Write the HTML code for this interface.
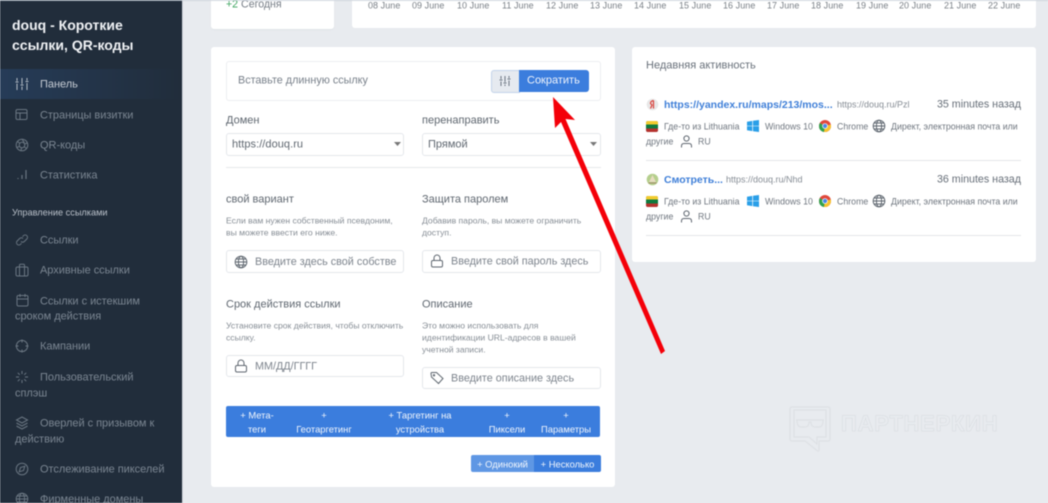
<!DOCTYPE html>
<html><head><meta charset="utf-8"><style>
html,body{margin:0;padding:0}
body{width:1048px;height:503px;overflow:hidden;position:relative;background:#e8ebef;font-family:"Liberation Sans","Noto Sans CJK SC",sans-serif}
#w{position:absolute;left:0;top:0;width:1048px;height:503px;overflow:hidden;filter:blur(.45px)}
#w div,#w svg{position:absolute}
.t{white-space:nowrap;transform:translateY(calc(-50% + 1px));line-height:1}
.n{font-size:11px;color:#7b8692;letter-spacing:-.03px;transform:translateY(calc(-50% + 2px))}
.l{font-size:11px;color:#5f6770;transform:translateY(calc(-50% + 2px))}
.s{font-size:8.6px;color:#868d95;transform:translateY(-50%)}
.p{font-size:10.8px;color:#7d848d}
.m{font-size:8.8px;color:#6f767f;transform:translateY(-50%)}
.d{font-size:9px;color:#7a8087;letter-spacing:.05px;transform:translateY(-50%)}
.card{background:#fff;border-radius:3px}
.i{background:#fff;border:1px solid #e4e7eb;border-radius:3px;box-sizing:border-box}
.b{font-size:9.4px;color:#f0f5fc;text-align:center}
svg.ic{fill:none;stroke:#6a7682;stroke-width:1}
svg.g{fill:none;stroke:#5f6770;stroke-width:1}
</style></head><body><div id="w">

<div style="left:0;top:0;width:182px;height:503px;background:#212d3b"></div>
<div style="left:182px;top:0;width:1px;height:503px;background:#d4d8dd"></div>
<div style="left:0;top:69px;width:182px;height:30px;background:linear-gradient(90deg,#263c58,#212d3b)"></div>

<div class="t" style="left:12px;top:23.500px;font-size:14px;font-weight:bold;color:#f0f2f5">douq - Короткие</div>
<div class="t" style="left:12px;top:43.500px;font-size:14px;font-weight:bold;color:#f0f2f5">ссылки, QR-коды</div>

<div class="t n" style="left:40px;top:83px;color:#c6ccd4">Панель</div>
<div class="t n" style="left:40px;top:113.500px">Страницы визитки</div>
<div class="t n" style="left:40px;top:144px">QR-коды</div>
<div class="t n" style="left:40px;top:174px">Статистика</div>
<div class="t" style="left:12px;top:212px;font-size:9.200px;color:#b9c0c9">Управление ссылками</div>
<div class="t n" style="left:40px;top:239px">Ссылки</div>
<div class="t n" style="left:40px;top:269px">Архивные ссылки</div>
<div class="t n" style="left:40px;top:299.500px">Ссылки с истекшим</div>
<div class="t n" style="left:15px;top:315px">сроком действия</div>
<div class="t n" style="left:40px;top:345px">Кампании</div>
<div class="t n" style="left:40px;top:375.500px">Пользовательский</div>
<div class="t n" style="left:15px;top:391.500px">сплэш</div>
<div class="t n" style="left:40px;top:421.500px">Оверлей с призывом к</div>
<div class="t n" style="left:15px;top:437.500px">действию</div>
<div class="t n" style="left:40px;top:467.500px">Отслеживание пикселей</div>
<div class="t n" style="left:40px;top:498px">Фирменные домены</div>

<svg class="ic" style="left:15px;top:77px;stroke:#b4bcc6" width="14" height="14" viewBox="0 0 14 14"><path d="M2 1v3M2 6.500V13M7 1v6M7 9.500V13M12 1v2.500M12 6v7M.5 5h3M5.500 8h3M10.500 4.500h3"/></svg>
<svg class="ic" style="left:15px;top:108px" width="13" height="13" viewBox="0 0 13 13"><rect x="1" y="1.500" width="11" height="10" rx="1.500"/><path d="M1 5h11M5 5v6.500"/></svg>
<svg class="ic" style="left:15px;top:138px" width="14" height="14" viewBox="0 0 14 14"><circle cx="7" cy="7" r="5.800"/><circle cx="7" cy="7" r="2.800"/><path d="M7 1.200l2.400 3.500M12.500 5l-3.300 1M11.500 10.500L9 8.500M6 12.800L6.500 9.700M1.800 9.500l3-1.200M2.500 3.500L5 5.500"/></svg>
<svg class="ic" style="left:16px;top:168px" width="12" height="13" viewBox="0 0 12 13"><path d="M2 10v1M6 7v4M10 2v9" stroke-width="1.200"/></svg>
<svg class="ic" style="left:15px;top:233px" width="14" height="14" viewBox="0 0 14 14"><path d="M6 8.500a2.300 2.300 0 0 0 3.300 0l2.500-2.500a2.300 2.300 0 0 0-3.300-3.300L7.500 3.700M8 5.500a2.300 2.300 0 0 0-3.300 0L2.200 8a2.300 2.300 0 0 0 3.300 3.300l1-1"/></svg>
<svg class="ic" style="left:15px;top:263px" width="14" height="14" viewBox="0 0 14 14"><rect x="1" y="4" width="12" height="9" rx="1.500"/><path d="M4.500 4V2.200q0-1 1-1h3q1 0 1 1V4M4.500 4v9M9.500 4v9"/></svg>
<svg class="ic" style="left:16px;top:293px" width="13" height="14" viewBox="0 0 13 14"><rect x="1" y="2.500" width="11" height="10.500" rx="1.500"/><path d="M1 6h11M4 1v3M9 1v3"/></svg>
<svg class="ic" style="left:15px;top:339px" width="14" height="14" viewBox="0 0 14 14"><circle cx="7" cy="7" r="5.600"/><path d="M7 .5v3M7 10.500v3M.5 7h3M10.500 7h3"/></svg>
<svg class="ic" style="left:15px;top:370px" width="14" height="14" viewBox="0 0 14 14"><path d="M7 1v3M7 10v3M1 7h3M10 7h3M2.800 2.800l2 2M9.200 9.200l2 2M2.800 11.200l2-2M9.200 4.800l2-2"/></svg>
<svg class="ic" style="left:15px;top:416px" width="14" height="14" viewBox="0 0 14 14"><path d="M7 1L1.500 4 7 7l5.500-3zM1.500 7L7 10l5.500-3M1.500 10L7 13l5.500-3"/></svg>
<svg class="ic" style="left:15px;top:462px" width="14" height="14" viewBox="0 0 14 14"><circle cx="7" cy="7" r="5.800"/><path d="M9.800 4.200L8.500 8.500 4.200 9.800 5.500 5.500z"/></svg>
<svg class="ic" style="left:15px;top:492px" width="14" height="14" viewBox="0 0 14 14"><circle cx="7" cy="7" r="5.800"/><ellipse cx="7" cy="7" rx="2.600" ry="5.800"/><path d="M1.200 7h11.600M2 4h10M2 10h10"/></svg>

<div class="card" style="left:211px;top:-6px;width:123px;height:35px;box-shadow:0 1px 1px #dfe3e7"></div>
<div class="card" style="left:352px;top:-6px;width:684px;height:34px"></div>
<div class="t" style="left:226px;top:3.500px;font-size:10.600px;color:#757c85"><span style="color:#3da55f">+2</span> Сегодня</div>
<div class="t d" style="left:368px;top:6px">08 June</div>
<div class="t d" style="left:412px;top:6px">09 June</div>
<div class="t d" style="left:457px;top:6px">10 June</div>
<div class="t d" style="left:502px;top:6px">11 June</div>
<div class="t d" style="left:546px;top:6px">12 June</div>
<div class="t d" style="left:590px;top:6px">13 June</div>
<div class="t d" style="left:634px;top:6px">14 June</div>
<div class="t d" style="left:679px;top:6px">15 June</div>
<div class="t d" style="left:723px;top:6px">16 June</div>
<div class="t d" style="left:767px;top:6px">17 June</div>
<div class="t d" style="left:811px;top:6px">18 June</div>
<div class="t d" style="left:856px;top:6px">19 June</div>
<div class="t d" style="left:899px;top:6px">20 June</div>
<div class="t d" style="left:944px;top:6px">21 June</div>
<div class="t d" style="left:988px;top:6px">22 June</div>

<div class="card" style="left:211px;top:47px;width:404px;height:440px"></div>
<div class="card" style="left:632px;top:47px;width:404px;height:215px"></div>

<div class="i" style="left:226px;top:61px;width:375px;height:40px;border-color:#eceef1"></div>
<div class="t" style="left:238px;top:80px;font-size:10.800px;color:#78808a">Вставьте длинную ссылку</div>
<div style="left:491px;top:70px;width:29px;height:23px;background:#e6eaf0;border:1.500px solid #c3d3ea;border-radius:3px 0 0 3px;box-sizing:border-box"></div>
<svg class="ic" style="left:499px;top:75px;stroke:#6a7480" width="12" height="12" viewBox="0 0 12 12"><path d="M2 1v3M2 6.500V11M6 1v6M6 9.500V11M10 1v2M10 5.500V11M.5 5h3M4.500 8h3M8.500 4h3"/></svg>
<div style="left:519px;top:70px;width:70px;height:22px;background:#3b7ddd;border-radius:0 3px 3px 0"></div>
<div class="t" style="left:527px;top:80px;font-size:11px;color:#eef3fc">Сократить</div>

<div class="t l" style="left:226px;top:118.500px">Домен</div>
<div class="t l" style="left:422px;top:118.500px">перенаправить</div>
<div class="i" style="left:226px;top:133px;width:178px;height:23px"></div>
<div class="i" style="left:422px;top:133px;width:179px;height:23px"></div>
<div class="t" style="left:232px;top:144px;font-size:11px;color:#5f6770;letter-spacing:.05px">https://douq.ru</div>
<div class="t" style="left:428px;top:144px;font-size:11px;color:#5f6770">Прямой</div>
<svg style="left:394px;top:142px" width="7" height="5"><path d="M0 0h7L3.500 4z" fill="#777"/></svg>
<svg style="left:590px;top:142px" width="7" height="5"><path d="M0 0h7L3.500 4z" fill="#777"/></svg>
<div style="left:226px;top:167px;width:375px;height:1px;background:#e6e8eb"></div>

<div class="t l" style="left:226px;top:197.500px">свой вариант</div>
<div class="t l" style="left:422px;top:197.500px">Защита паролем</div>
<div class="t s" style="left:226px;top:221px">Если вам нужен собственный псевдоним,</div>
<div class="t s" style="left:226px;top:233px">вы можете ввести его ниже.</div>
<div class="t s" style="left:422px;top:221px">Добавив пароль, вы можете ограничить</div>
<div class="t s" style="left:422px;top:233px">доступ.</div>
<div class="i" style="left:226px;top:250px;width:178px;height:23px"></div>
<div class="i" style="left:422px;top:250px;width:179px;height:23px"></div>
<div class="t p" style="left:255px;top:261px;width:142px;overflow:hidden;line-height:14px">Введите здесь свой собственный</div>
<div class="t p" style="left:451px;top:261px">Введите свой пароль здесь</div>
<svg class="g" style="left:234px;top:255px" width="14" height="14" viewBox="0 0 14 14"><circle cx="7" cy="7" r="5.800"/><ellipse cx="7" cy="7" rx="2.600" ry="5.800"/><path d="M1.200 7h11.600M2 4h10M2 10h10"/></svg>
<svg class="g" style="left:430px;top:254px" width="14" height="14" viewBox="0 0 14 14"><rect x="1.500" y="6.500" width="11" height="6.500" rx="1.500"/><path d="M4 6.500V4a3 3 0 0 1 6 0v2.500"/></svg>

<div class="t l" style="left:226px;top:302.500px">Срок действия ссылки</div>
<div class="t l" style="left:422px;top:302.500px">Описание</div>
<div class="t s" style="left:226px;top:326px">Установите срок действия, чтобы отключить</div>
<div class="t s" style="left:226px;top:338px">ссылку.</div>
<div class="t s" style="left:422px;top:326px">Это можно использовать для</div>
<div class="t s" style="left:422px;top:338px">идентификации URL-адресов в вашей</div>
<div class="t s" style="left:422px;top:350px">учетной записи.</div>
<div class="i" style="left:226px;top:355px;width:178px;height:22px"></div>
<div class="i" style="left:422px;top:367px;width:179px;height:22px"></div>
<div class="t p" style="left:255px;top:365.500px">ММ/ДД/ГГГГ</div>
<div class="t p" style="left:451px;top:377.500px">Введите описание здесь</div>
<svg class="g" style="left:234px;top:359px" width="14" height="14" viewBox="0 0 14 14"><rect x="1.500" y="6.500" width="11" height="6.500" rx="1.500"/><path d="M4 6.500V4a3 3 0 0 1 6 0v2.500"/></svg>
<svg class="g" style="left:430px;top:371px" width="14" height="14" viewBox="0 0 14 14"><path d="M1 2.500Q1 1.500 2 1.500h4.500l6.500 6-4.500 5L1.500 6z"/><circle cx="4" cy="4.300" r=".7"/></svg>

<div style="left:226px;top:406px;width:374px;height:31px;background:#3b7ddd;border-radius:2px"></div>
<div class="t b" style="left:227px;top:414px;width:60px">+ Мета-</div>
<div class="t b" style="left:227px;top:428px;width:60px">теги</div>
<div class="t b" style="left:290px;top:414px;width:68px">+</div>
<div class="t b" style="left:290px;top:428px;width:68px">Геотаргетинг</div>
<div class="t b" style="left:375px;top:414px;width:90px">+ Таргетинг на</div>
<div class="t b" style="left:375px;top:428px;width:90px">устройства</div>
<div class="t b" style="left:482px;top:414px;width:50px">+</div>
<div class="t b" style="left:482px;top:428px;width:50px">Пиксели</div>
<div class="t b" style="left:536px;top:414px;width:60px">+</div>
<div class="t b" style="left:536px;top:428px;width:60px">Параметры</div>

<div style="left:471px;top:455px;width:63px;height:17px;background:#5f97e4;border-radius:2px 0 0 2px"></div>
<div style="left:534px;top:455px;width:67px;height:17px;background:#3b7ddd;border-radius:0 2px 2px 0"></div>
<div class="t b" style="left:471px;top:462.500px;width:63px">+ Одинокий</div>
<div class="t b" style="left:534px;top:462.500px;width:67px">+ Несколько</div>

<div class="t" style="left:646px;top:64.500px;font-size:11px;color:#68707a">Недавняя активность</div>

<svg style="left:646px;top:98px" width="13" height="13" viewBox="0 0 13 13"><circle cx="6.500" cy="6.500" r="5.800" fill="#e8e8e8"/><path d="M7.500 2.500Q4.500 3 4.500 5.500l1.500 1.500-1.500 3.500M7.500 2.500v8" fill="none" stroke="#d8403a" stroke-width="1.200"/></svg>
<div class="t" style="left:664px;top:103.500px;font-size:10.500px;font-weight:bold;color:#3f7fd8">https://yandex.ru/maps/213/mos...</div>
<div class="t" style="left:837px;top:104px;font-size:9px;color:#868d95">https://douq.ru/Pzl</div>
<div class="t" style="left:921px;top:103.500px;width:100px;text-align:right;font-size:10.700px;color:#666e78">35 minutes назад</div>

<svg style="left:646px;top:121px" width="12" height="11" viewBox="0 0 12 11"><rect width="12" height="11" rx="2" fill="#555"/><path d="M0 2q0-2 2-2h8q2 0 2 2v1.500H0z" fill="#f2cb2e"/><path d="M0 3.500h12v4H0z" fill="#0f7a3e"/><path d="M0 7.500h12V9q0 2-2 2H2q-2 0-2-2z" fill="#b5322e"/></svg>
<div class="t m" style="left:664px;top:126.500px">Где-то из Lithuania</div>
<svg style="left:747px;top:120px" width="12" height="12" viewBox="0 0 12 12"><path d="M0 1.700L5.300.9v4.800H0zM6 .8L12 0v5.700H6zM0 6.300h5.300v4.800L0 10.300zM6 6.300h6V12L6 11.200z" fill="#2a9fe8"/></svg>
<div class="t m" style="left:765px;top:126.500px">Windows 10</div>
<svg style="left:819px;top:120px" width="12" height="12" viewBox="0 0 12 12"><circle cx="6" cy="6" r="6" fill="#e0483c"/><path d="M6 6L.8 3Q0 4.500 0 6q0 5 5 6z" fill="#2fa24e"/><path d="M6 6l-1 6q.5 0 1 0a6 6 0 0 0 5.800-7.500z" fill="#f6c42e"/><circle cx="6" cy="6" r="2.800" fill="#fff"/><circle cx="6" cy="6" r="2.100" fill="#4a88e8"/></svg>
<div class="t m" style="left:837px;top:126.500px">Chrome</div>
<svg class="g" style="left:872px;top:119px" width="14" height="14" viewBox="0 0 14 14"><circle cx="7" cy="7" r="5.800"/><ellipse cx="7" cy="7" rx="2.600" ry="5.800"/><path d="M1.200 7h11.600M2 4h10M2 10h10"/></svg>
<div class="t m" style="left:891px;top:126.500px">Директ, электронная почта или</div>
<div class="t m" style="left:646px;top:141.500px">другие</div>
<svg class="g" style="left:680px;top:135px" width="13" height="13" viewBox="0 0 13 13"><circle cx="6.500" cy="3.500" r="2.600"/><path d="M1.500 12.500v-1.500q0-2.500 2.500-2.500h5q2.500 0 2.500 2.500v1.500"/></svg>
<div class="t m" style="left:698px;top:141.500px">RU</div>
<div style="left:646px;top:160px;width:375px;height:1px;background:#e3e5e8"></div>

<svg style="left:646px;top:173px" width="13" height="13" viewBox="0 0 13 13"><circle cx="6.500" cy="6.500" r="5.800" fill="#b5cf8d"/><path d="M6.500 2L3 9h7z" fill="#e7dcc0"/><path d="M2.500 10h8" stroke="#a18a68"/></svg>
<div class="t" style="left:664px;top:178.500px;font-size:10.500px;font-weight:bold;color:#3f7fd8">Смотреть...</div>
<div class="t" style="left:726px;top:179px;font-size:9px;color:#868d95">https://douq.ru/Nhd</div>
<div class="t" style="left:921px;top:178.500px;width:100px;text-align:right;font-size:10.700px;color:#666e78">36 minutes назад</div>

<svg style="left:646px;top:196px" width="12" height="11" viewBox="0 0 12 11"><rect width="12" height="11" rx="2" fill="#555"/><path d="M0 2q0-2 2-2h8q2 0 2 2v1.500H0z" fill="#f2cb2e"/><path d="M0 3.500h12v4H0z" fill="#0f7a3e"/><path d="M0 7.500h12V9q0 2-2 2H2q-2 0-2-2z" fill="#b5322e"/></svg>
<div class="t m" style="left:664px;top:201.500px">Где-то из Lithuania</div>
<svg style="left:747px;top:195px" width="12" height="12" viewBox="0 0 12 12"><path d="M0 1.700L5.300.9v4.800H0zM6 .8L12 0v5.700H6zM0 6.300h5.300v4.800L0 10.300zM6 6.300h6V12L6 11.200z" fill="#2a9fe8"/></svg>
<div class="t m" style="left:765px;top:201.500px">Windows 10</div>
<svg style="left:819px;top:195px" width="12" height="12" viewBox="0 0 12 12"><circle cx="6" cy="6" r="6" fill="#e0483c"/><path d="M6 6L.8 3Q0 4.500 0 6q0 5 5 6z" fill="#2fa24e"/><path d="M6 6l-1 6q.5 0 1 0a6 6 0 0 0 5.800-7.500z" fill="#f6c42e"/><circle cx="6" cy="6" r="2.800" fill="#fff"/><circle cx="6" cy="6" r="2.100" fill="#4a88e8"/></svg>
<div class="t m" style="left:837px;top:201.500px">Chrome</div>
<svg class="g" style="left:872px;top:194px" width="14" height="14" viewBox="0 0 14 14"><circle cx="7" cy="7" r="5.800"/><ellipse cx="7" cy="7" rx="2.600" ry="5.800"/><path d="M1.200 7h11.600M2 4h10M2 10h10"/></svg>
<div class="t m" style="left:891px;top:201.500px">Директ, электронная почта или</div>
<div class="t m" style="left:646px;top:216.500px">другие</div>
<svg class="g" style="left:680px;top:210px" width="13" height="13" viewBox="0 0 13 13"><circle cx="6.500" cy="3.500" r="2.600"/><path d="M1.500 12.500v-1.500q0-2.500 2.500-2.500h5q2.500 0 2.500 2.500v1.500"/></svg>
<div class="t m" style="left:698px;top:216.500px">RU</div>
<div style="left:646px;top:235px;width:375px;height:1px;background:#e3e5e8"></div>

<svg style="left:789px;top:406px;fill:none;stroke:#dcdfe3;stroke-width:1" width="44" height="48" viewBox="0 0 44 48"><path d="M3 1h36q2 0 2 2v30q0 2-2 2H30v9q0 2-2 .5L16 35H3q-2 0-2-2V3q0-2 2-2zM5 4h32v27H28v7l-8-7H5z"/><path d="M7 14h28M8 14q0 7 4 7h4q4 0 4-5h2q0 5 4 5h4q4 0 4-7"/></svg>
<div class="t" style="left:841px;top:423px;font-size:22px;letter-spacing:.75px;color:#e8ebef;-webkit-text-stroke:.5px #d6dade;font-weight:bold">ПАРТНЕРКИН</div>

<svg style="left:0;top:0" width="1048" height="503"><path d="M553 97L575 120 565.500 119 665 351 661 354 561 122 555 128z" fill="#f40009"/></svg>
<div style="left:0;top:0;width:1048px;height:1px;background:#c4ccd5;opacity:.7"></div>
</div></body></html>
